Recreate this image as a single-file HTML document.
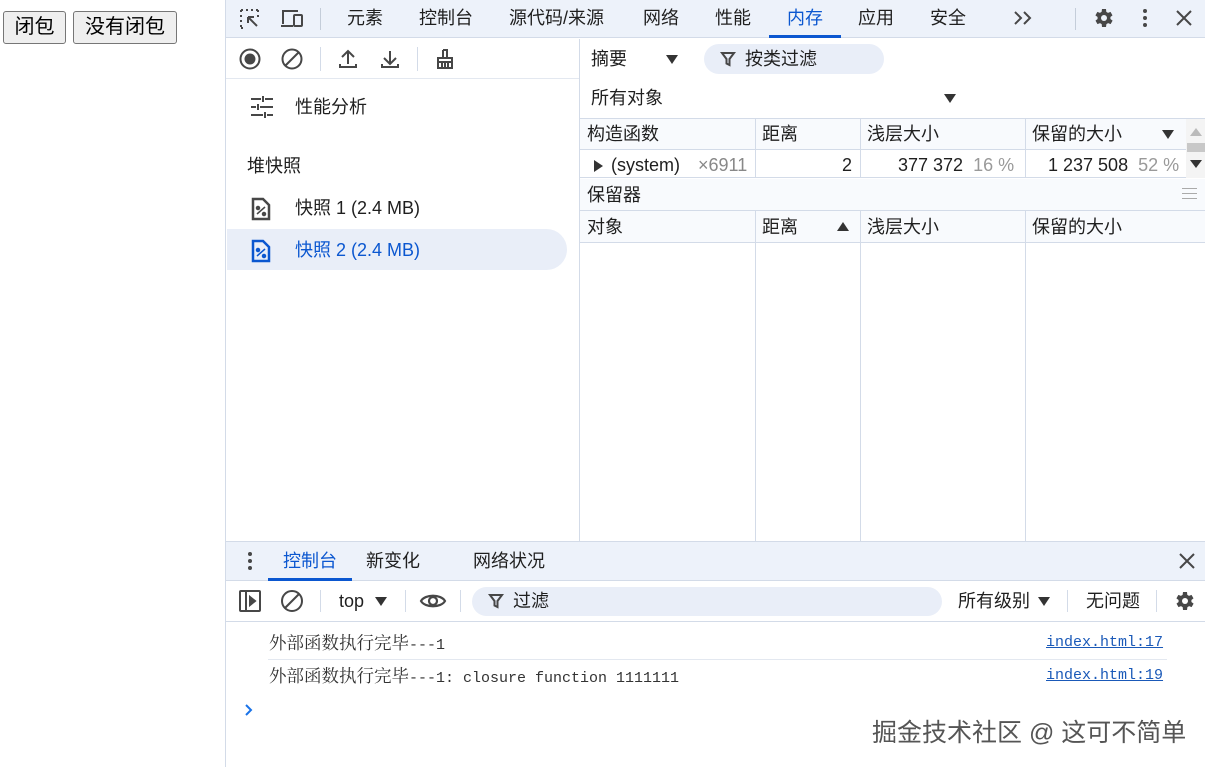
<!DOCTYPE html>
<html><head><meta charset="utf-8"><style>
*{box-sizing:border-box;margin:0;padding:0}
body{width:1205px;height:767px;position:relative;overflow:hidden;background:#fff;font-family:"Liberation Sans","Noto Sans CJK SC",sans-serif;color:#1f1f1f;font-size:18px}
.a{position:absolute;white-space:nowrap;line-height:22px}
.btn{position:absolute;top:11px;height:33px;border:1px solid #767676;border-radius:3px;background:#efefef;font-size:20px;line-height:31px;text-align:center;color:#000}
.mono{font-family:"Liberation Mono","Noto Sans CJK SC",monospace;font-size:15px}
.mono b{font-weight:normal;font-family:"Noto Serif CJK SC",serif;font-size:17.5px}
.dn{position:absolute;width:0;height:0;border-left:6px solid transparent;border-right:6px solid transparent;border-top:9px solid #333}
.up{position:absolute;width:0;height:0;border-left:6px solid transparent;border-right:6px solid transparent;border-bottom:9px solid #333}
svg{position:absolute}
</style></head><body>
<div class="btn" style="left:3px;width:63px">闭包</div>
<div class="btn" style="left:73px;width:104px">没有闭包</div>

<div class="a" style="left:225px;top:0;width:1px;height:767px;background:#d3dbe8"></div>
<div class="a" style="left:226px;top:0;width:979px;height:38px;background:#edf2fa;border-bottom:1px solid #d3dbe8"></div>
<svg style="left:238px;top:7px" width="24" height="24" viewBox="0 0 24 24" fill="none" stroke="#474747" stroke-width="2"><path d="M3 3h2M8 3h2M13 3h2M18 3h2M3 3v2M3 8v2M3 13v2M3 18v2M3 21h2M20 3v2M20 8v2"/><path d="M10 10l9 9M10 10h6M10 10v6"/></svg>
<svg style="left:279px;top:7px" width="26" height="24" viewBox="0 0 26 24" fill="none" stroke="#474747" stroke-width="2"><path d="M4 17V4h15M2 19h12"/><rect x="15" y="8" width="8" height="11" rx="1"/></svg>
<div class="a" style="left:320px;top:8px;width:1px;height:22px;background:#c4cdd9"></div>
<div class="a" style="left:347px;top:7px">元素</div>
<div class="a" style="left:419px;top:7px">控制台</div>
<div class="a" style="left:509px;top:7px">源代码/来源</div>
<div class="a" style="left:643px;top:7px">网络</div>
<div class="a" style="left:715px;top:7px">性能</div>
<div class="a" style="left:787px;top:7px;color:#0b57d0">内存</div>
<div class="a" style="left:769px;top:35px;width:72px;height:3px;background:#0b57d0"></div>
<div class="a" style="left:858px;top:7px">应用</div>
<div class="a" style="left:930px;top:7px">安全</div>
<svg style="left:1013px;top:11px" width="20" height="14" viewBox="0 0 20 14" fill="none" stroke="#474747" stroke-width="2"><path d="M2 1l6 6-6 6M11 1l6 6-6 6"/></svg>
<div class="a" style="left:1075px;top:8px;width:1px;height:22px;background:#c4cdd9"></div>
<svg style="left:1091px;top:6px" width="24" height="24" viewBox="0 0 24 24"><path fill="#474747" d="M19.4 13a7.5 7.5 0 000-2l2.1-1.6-2-3.5-2.5 1a7 7 0 00-1.7-1L15 3h-4l-.4 2.9a7 7 0 00-1.7 1l-2.5-1-2 3.5L6.6 11a7.5 7.5 0 000 2l-2.1 1.6 2 3.5 2.5-1a7 7 0 001.7 1L11 21h4l.4-2.9a7 7 0 001.7-1l2.5 1 2-3.5z"/><circle cx="13" cy="12" r="3" fill="#edf2fa"/></svg>
<div class="a" style="left:1143px;top:9px;width:4px;height:4px;border-radius:2px;background:#474747;box-shadow:0 7px 0 #474747,0 14px 0 #474747"></div>
<svg style="left:1175px;top:9px" width="18" height="18" viewBox="0 0 18 18" stroke="#474747" stroke-width="2"><path d="M2 2l14 14M16 2L2 16"/></svg>

<div class="a" style="left:226px;top:78px;width:353px;height:1px;background:#e3e8f0"></div>
<div class="a" style="left:579px;top:39px;width:1px;height:502px;background:#d3dbe8"></div>
<svg style="left:238px;top:47px" width="24" height="24" viewBox="0 0 24 24"><circle cx="12" cy="12" r="9.5" fill="none" stroke="#474747" stroke-width="2"/><circle cx="12" cy="12" r="5.5" fill="#474747"/></svg>
<svg style="left:280px;top:47px" width="24" height="24" viewBox="0 0 24 24" fill="none" stroke="#474747" stroke-width="2"><circle cx="12" cy="12" r="9.5"/><path d="M5.5 18.5l13-13"/></svg>
<div class="a" style="left:320px;top:47px;width:1px;height:24px;background:#d3dbe8"></div>
<svg style="left:337px;top:47px" width="22" height="24" viewBox="0 0 22 24" fill="none" stroke="#474747" stroke-width="2"><path d="M11 17V4M5 10l6-6 6 6M3 17v3h16v-3"/></svg>
<svg style="left:379px;top:47px" width="22" height="24" viewBox="0 0 22 24" fill="none" stroke="#474747" stroke-width="2"><path d="M11 4v13M5 11l6 6 6-6M3 17v3h16v-3"/></svg>
<div class="a" style="left:417px;top:47px;width:1px;height:24px;background:#d3dbe8"></div>
<svg style="left:434px;top:47px" width="22" height="24" viewBox="0 0 22 24" fill="none" stroke="#474747" stroke-width="2"><path d="M9 3h4v7M9 3v7M4 11h14v10H4zM4 15h14M8 16v5M11 16v5M14 16v5"/></svg>
<svg style="left:250px;top:96px" width="24" height="22" viewBox="0 0 24 22" stroke="#474747" stroke-width="2"><path d="M1 3h10M15 3h8M13 0v6M1 11h5M10 11h13M8 8v6M1 19h12M17 19h6M15 16v6"/></svg>
<div class="a" style="left:295px;top:96px">性能分析</div>
<div class="a" style="left:247px;top:155px">堆快照</div>
<svg style="left:251px;top:197px" width="20" height="24" viewBox="0 0 20 24" fill="none" stroke="#474747" stroke-width="2.5"><path d="M2 2h10l6 6v14H2z"/><path d="M6 17l8-7" stroke-width="1.5"/><circle cx="7" cy="11" r="1" fill="#474747"/><circle cx="13" cy="17" r="1" fill="#474747"/></svg>
<div class="a" style="left:295px;top:197px">快照 1 (2.4 MB)</div>
<div class="a" style="left:227px;top:229px;width:340px;height:41px;border-radius:0 21px 21px 0;background:#e9eef8"></div>
<svg style="left:251px;top:239px" width="20" height="24" viewBox="0 0 20 24" fill="none" stroke="#0b57d0" stroke-width="2.5"><path d="M2 2h10l6 6v14H2z"/><path d="M6 17l8-7" stroke-width="1.5"/><circle cx="7" cy="11" r="1" fill="#0b57d0"/><circle cx="13" cy="17" r="1" fill="#0b57d0"/></svg>
<div class="a" style="left:295px;top:239px;color:#0b57d0">快照 2 (2.4 MB)</div>

<div class="a" style="left:591px;top:48px">摘要</div>
<div class="dn" style="left:666px;top:55px"></div>
<div class="a" style="left:704px;top:44px;width:180px;height:30px;border-radius:15px;background:#e9eef8"></div>
<svg style="left:720px;top:51px" width="16" height="16" viewBox="0 0 16 16" fill="none" stroke="#474747" stroke-width="2"><path d="M2 2h12L9.5 8v6l-3-1.5V8z"/></svg>
<div class="a" style="left:745px;top:48px">按类过滤</div>
<div class="a" style="left:591px;top:87px">所有对象</div>
<div class="dn" style="left:944px;top:94px"></div>
<div class="a" style="left:580px;top:118px;width:625px;height:60px;border-top:1px solid #d3dbe8;border-bottom:1px solid #d3dbe8"></div>
<div class="a" style="left:580px;top:119px;width:625px;height:31px;background:#f8fafd;border-bottom:1px solid #d3dbe8"></div>
<div class="a" style="left:755px;top:119px;width:1px;height:59px;background:#d3dbe8"></div>
<div class="a" style="left:860px;top:119px;width:1px;height:59px;background:#d3dbe8"></div>
<div class="a" style="left:1025px;top:119px;width:1px;height:59px;background:#d3dbe8"></div>
<div class="a" style="left:587px;top:123px">构造函数</div>
<div class="a" style="left:762px;top:123px">距离</div>
<div class="a" style="left:867px;top:123px">浅层大小</div>
<div class="a" style="left:1032px;top:123px">保留的大小</div>
<div class="dn" style="left:1162px;top:130px"></div>
<div class="a" style="left:1186px;top:119px;width:19px;height:59px;background:#f4f4f4"></div>
<div class="up" style="left:1190px;top:128px;border-bottom-color:#bbb;border-width:0 6px 8px"></div>
<div class="a" style="left:1187px;top:143px;width:18px;height:9px;background:#c8c8c8"></div>
<div class="dn" style="left:1190px;top:160px;border-width:8px 6px 0"></div>
<div class="a" style="left:594px;top:160px;width:0;height:0;border-top:6px solid transparent;border-bottom:6px solid transparent;border-left:9px solid #333"></div>
<div class="a" style="left:611px;top:154px">(system)</div>
<div class="a" style="left:698px;top:154px;color:#888">×6911</div>
<div class="a" style="left:842px;top:154px">2</div>
<div class="a" style="left:898px;top:154px">377 372 <span style="color:#999">&nbsp;16 %</span></div>
<div class="a" style="left:1048px;top:154px">1 237 508 <span style="color:#999">&nbsp;52 %</span></div>
<div class="a" style="left:580px;top:179px;width:625px;height:32px;background:#f8fafd;border-bottom:1px solid #d3dbe8"></div>
<div class="a" style="left:587px;top:184px">保留器</div>
<div class="a" style="left:1182px;top:188px;width:15px;height:1px;background:#aaa;box-shadow:0 5px 0 #aaa,0 10px 0 #aaa"></div>
<div class="a" style="left:580px;top:211px;width:625px;height:32px;background:#f8fafd;border-bottom:1px solid #d3dbe8"></div>
<div class="a" style="left:755px;top:211px;width:1px;height:330px;background:#d3dbe8"></div>
<div class="a" style="left:860px;top:211px;width:1px;height:330px;background:#d3dbe8"></div>
<div class="a" style="left:1025px;top:211px;width:1px;height:330px;background:#d3dbe8"></div>
<div class="a" style="left:587px;top:216px">对象</div>
<div class="a" style="left:762px;top:216px">距离</div>
<div class="up" style="left:837px;top:222px"></div>
<div class="a" style="left:867px;top:216px">浅层大小</div>
<div class="a" style="left:1032px;top:216px">保留的大小</div>

<div class="a" style="left:226px;top:541px;width:979px;height:40px;background:#edf2fa;border-top:1px solid #d3dbe8;border-bottom:1px solid #d3dbe8"></div>
<div class="a" style="left:248px;top:552px;width:4px;height:4px;border-radius:2px;background:#474747;box-shadow:0 7px 0 #474747,0 14px 0 #474747"></div>
<div class="a" style="left:283px;top:550px;color:#0b57d0">控制台</div>
<div class="a" style="left:268px;top:578px;width:84px;height:3px;background:#0b57d0"></div>
<div class="a" style="left:366px;top:550px">新变化</div>
<div class="a" style="left:473px;top:550px">网络状况</div>
<svg style="left:1179px;top:553px" width="16" height="16" viewBox="0 0 16 16" stroke="#474747" stroke-width="2"><path d="M1 1l14 14M15 1L1 15"/></svg>
<div class="a" style="left:226px;top:621px;width:979px;height:1px;background:#d3dbe8"></div>
<svg style="left:239px;top:590px" width="22" height="22" viewBox="0 0 22 22" fill="none" stroke="#474747" stroke-width="2"><rect x="1" y="1" width="20" height="20" rx="1"/><path d="M7 1v20"/><path d="M11 7l5 4-5 4z" fill="#474747"/></svg>
<svg style="left:280px;top:589px" width="24" height="24" viewBox="0 0 24 24" fill="none" stroke="#474747" stroke-width="2"><circle cx="12" cy="12" r="10"/><path d="M5 19L19 5"/></svg>
<div class="a" style="left:320px;top:590px;width:1px;height:22px;background:#d3dbe8"></div>
<div class="a" style="left:339px;top:590px">top</div>
<div class="dn" style="left:375px;top:597px"></div>
<div class="a" style="left:405px;top:590px;width:1px;height:22px;background:#d3dbe8"></div>
<svg style="left:419px;top:591px" width="28" height="20" viewBox="0 0 28 20" fill="none" stroke="#474747" stroke-width="2.2"><path d="M2 10C6 3 22 3 26 10C22 17 6 17 2 10z"/><circle cx="14" cy="10" r="4"/></svg>
<div class="a" style="left:460px;top:590px;width:1px;height:22px;background:#d3dbe8"></div>
<div class="a" style="left:472px;top:587px;width:470px;height:29px;border-radius:15px;background:#e9eef8"></div>
<svg style="left:488px;top:593px" width="16" height="16" viewBox="0 0 16 16" fill="none" stroke="#474747" stroke-width="2"><path d="M2 2h12L9.5 8v6l-3-1.5V8z"/></svg>
<div class="a" style="left:513px;top:590px">过滤</div>
<div class="a" style="left:958px;top:590px">所有级别</div>
<div class="dn" style="left:1038px;top:597px"></div>
<div class="a" style="left:1067px;top:590px;width:1px;height:22px;background:#d3dbe8"></div>
<div class="a" style="left:1086px;top:590px">无问题</div>
<div class="a" style="left:1156px;top:590px;width:1px;height:22px;background:#d3dbe8"></div>
<svg style="left:1172px;top:589px" width="24" height="24" viewBox="0 0 24 24"><path fill="#474747" d="M19.4 13a7.5 7.5 0 000-2l2.1-1.6-2-3.5-2.5 1a7 7 0 00-1.7-1L15 3h-4l-.4 2.9a7 7 0 00-1.7 1l-2.5-1-2 3.5L6.6 11a7.5 7.5 0 000 2l-2.1 1.6 2 3.5 2.5-1a7 7 0 001.7 1L11 21h4l.4-2.9a7 7 0 001.7-1l2.5 1 2-3.5z"/><circle cx="13" cy="12" r="3" fill="#fff"/></svg>

<div class="a mono" style="left:269px;top:632px;color:#333"><b>外部函数执行完毕</b>---1</div>
<div class="a mono" style="left:1046px;top:632px;color:#1a59b8;text-decoration:underline">index.html:17</div>
<div class="a" style="left:268px;top:659px;width:899px;height:1px;background:#e3e8f0"></div>
<div class="a mono" style="left:269px;top:665px;color:#333"><b>外部函数执行完毕</b>---1: closure function 1111111</div>
<div class="a mono" style="left:1046px;top:665px;color:#1a59b8;text-decoration:underline">index.html:19</div>
<svg style="left:244px;top:703px" width="9" height="14" viewBox="0 0 9 14" fill="none" stroke="#1a73e8" stroke-width="2"><path d="M2 2l5 5-5 5"/></svg>
<div class="a" style="left:872px;top:720px;font-size:25px;line-height:26px;color:#555;text-shadow:0 0 2px #fff">掘金技术社区 @ 这可不简单</div>
</body></html>
